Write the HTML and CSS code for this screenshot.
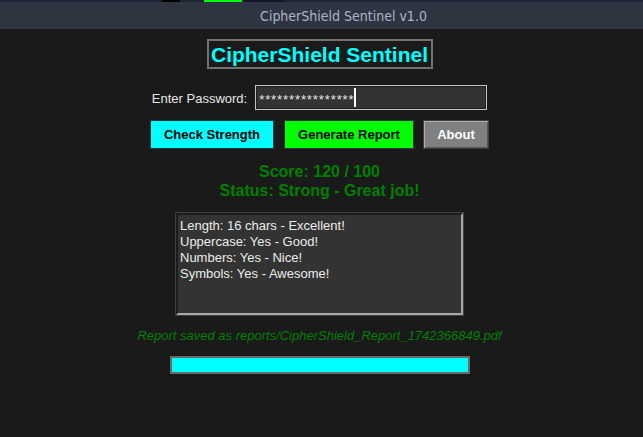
FILE: index.html
```html
<!DOCTYPE html>
<html>
<head>
<meta charset="utf-8">
<link rel="stylesheet" href="styles.css">
</head>
<body>
<div class="strip">
  <span class="seg seg-black"></span>
  <span class="seg seg-green"></span>
  <span class="seg seg-navy"></span>
</div>
<div class="titlebar">CipherShield Sentinel v1.0</div>
<main class="app">
  <h1 class="heading">CipherShield Sentinel</h1>
  <div class="pw-row">
    <label class="pw-label">Enter Password:</label>
    <div class="entry"><span class="stars">****************</span><span class="cursor"></span></div>
  </div>
  <div class="buttons">
    <button class="btn btn-check">Check Strength</button>
    <button class="btn btn-report">Generate Report</button>
    <button class="btn btn-about">About</button>
  </div>
  <div class="result">
    <div>Score: 120 / 100</div>
    <div>Status: Strong - Great job!</div>
  </div>
  <div class="details">
    <div class="details-inner">
      <div>Length: 16 chars - Excellent!</div>
      <div>Uppercase: Yes - Good!</div>
      <div>Numbers: Yes - Nice!</div>
      <div>Symbols: Yes - Awesome!</div>
    </div>
  </div>
  <div class="saved">Report saved as reports/CipherShield_Report_1742366849.pdf</div>
  <div class="progress"><div class="progress-fill"></div></div>
</main>
</body>
</html>
```
FILE: styles.css
```css
* { box-sizing: border-box; }
html, body { margin: 0; padding: 0; }
body {
  background: #1a1a1a;
  font-family: "Liberation Sans", Arial, sans-serif;
  width: 643px;
  height: 437px;
  overflow: hidden;
}
.strip {
  height: 2px;
  background: #1e2532;
  display: flex;
}
.seg { height: 2px; display: block; }
.seg-black { margin-left: 162px; width: 18px; background: #000; }
.seg-green { margin-left: 24px; width: 38px; background: #00ff00; }
.seg-navy { margin-left: 3px; width: 39px; background: #14142a; }
.titlebar {
  height: 27px;
  background: #2e3440;
  color: #aab6c8;
  font-family: "DejaVu Sans Condensed", "DejaVu Sans", sans-serif;
  font-size: 14px;
  display: flex;
  align-items: center;
  justify-content: center;
  padding-left: 44px;
  padding-top: 1px;
}
.app {
  display: flex;
  flex-direction: column;
  align-items: center;
  padding-right: 4px;
}
.heading {
  margin: 10px 0 0 0;
  height: 30px;
  width: 226px;
  border: 2px solid #727272;
  color: #00ffff;
  font-size: 21px;
  font-weight: bold;
  display: flex;
  align-items: center;
  justify-content: center;
  line-height: 1;
  white-space: nowrap;
}
.pw-row {
  margin-top: 16px;
  display: flex;
  align-items: center;
  gap: 8px;
}
.pw-label {
  color: #e6e6e6;
  font-size: 13px;
  margin-top: 1px;
}
.entry {
  width: 232px;
  height: 25px;
  background: #333333;
  border: 1px solid #c4c4c4;
  box-shadow: inset 0 0 0 1px #202020;
  display: flex;
  align-items: center;
  padding-left: 3px;
}
.stars {
  color: #e8e8e8;
  font-size: 13px;
  letter-spacing: 0.9px;
  margin-top: 4px;
}
.cursor {
  width: 2px;
  height: 19px;
  background: #ffffff;
  margin-left: -1px;
}
.buttons {
  margin-top: 10px;
  display: flex;
  gap: 10px;
}
.btn {
  height: 29px;
  border: 1px solid #2e3440;
  font-family: "Liberation Sans", Arial, sans-serif;
  font-weight: bold;
  font-size: 13px;
  color: #000;
  padding: 0;
  display: flex;
  align-items: center;
  justify-content: center;
}
.btn-check { width: 124px; background: #00ffff; }
.btn-report { width: 130px; background: #00ff00; margin-right: -1px; }
.btn-about {
  width: 66px;
  background: #808080;
  color: #ffffff;
  border: 1px solid #3b3f4a;
  box-shadow: inset 1px 1px 0 #b0b0b0, inset -1px -1px 0 #555;
}
.result {
  margin-top: 13px;
  color: #008000;
  font-size: 16px;
  font-weight: bold;
  line-height: 19px;
  text-align: center;
}
.details {
  margin-top: 12px;
  width: 289px;
  height: 104px;
  border: 1px solid #3a3f4c;
}
.details-inner {
  height: 100%;
  background: #333333;
  border-top: 2px solid #1c1c1c;
  border-left: 2px solid #1c1c1c;
  border-bottom: 2px solid #a8a8a8;
  border-right: 2px solid #a8a8a8;
  color: #ececec;
  font-size: 13px;
  line-height: 16px;
  padding: 3px 0 0 2px;
}
.saved {
  margin-top: 12px;
  color: #008000;
  font-style: italic;
  font-size: 13px;
  line-height: 16px;
}
.progress {
  margin-top: 12px;
  width: 300px;
  height: 18px;
  border: 2px solid #6a6a6a;
  background: #1a1a1a;
}
.progress-fill {
  width: 100%;
  height: 100%;
  background: #00ffff;
}
```
